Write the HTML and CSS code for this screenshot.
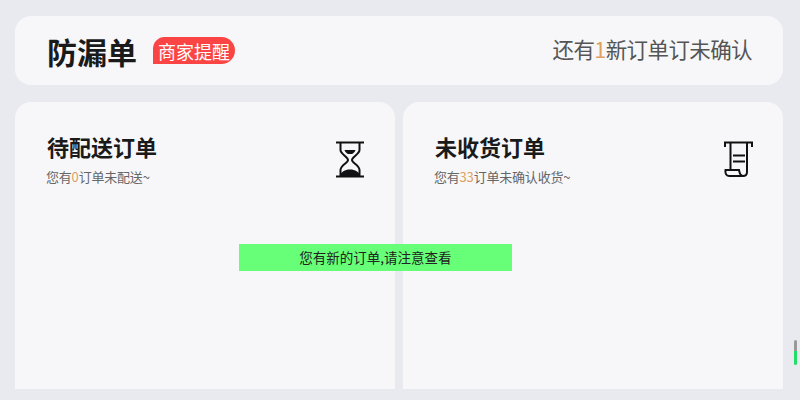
FILE: index.html
```html
<!DOCTYPE html>
<html lang="zh-CN">
<head>
  <meta charset="UTF-8" />
  <meta name="viewport" content="width=device-width, initial-scale=1.0"/>
  <title>防漏单</title>
  <link rel="stylesheet" href="styles.css">
</head>
<body>

  <div class="header">
    <div class="header-left">
      <h1>防漏单</h1>
      <span class="badge">商家提醒</span>
    </div>
    <div class="notice">还有<span class="num">1</span>新订单订未确认</div>
  </div>

  <div class="cards">
    <div class="card">
      <div>
        <h2>待配送订单</h2>
        <p>您有<span class="num">0</span>订单未配送~</p>
      </div>
      <svg class="icon" width="30" height="38" viewBox="0 0 30 38">
        <path d="M1 2.500H29M1 36.500H29" fill="none" stroke="#111" stroke-width="2"/>
        <path d="M5.500 2.500V10C5.500 14 13 17 13 20C13 23 5.500 25 5.500 30V36M24.500 2.500V10C24.500 14 17 17 17 20C17 23 24.500 25 24.500 30V36" fill="none" stroke="#111" stroke-width="2"/>
        <path d="M9.500 10H20.500C20 12 18 13.500 17 14H13C12 13.500 10 12 9.500 10Z" fill="#111"/>
        <path d="M5 36C5.500 32 10 29.500 15 29.500C20 29.500 24.500 32 25 36Z" fill="#111"/>
      </svg>
    </div>
    <div class="card">
      <div>
        <h2>未收货订单</h2>
        <p>您有<span class="num">33</span>订单未确认收货~</p>
      </div>
      <svg class="icon" width="30" height="38" viewBox="0 0 30 38">
        <path d="M2 7V2.500H29V7" fill="none" stroke="#111" stroke-width="2"/>
        <path d="M7.500 2.500V30M24 2.500V32C24 35 22 36 20 36H6" fill="none" stroke="#111" stroke-width="2"/>
        <path d="M6 36C3 36 2 33 2.500 30H16C16.500 33 18 36 20 36" fill="none" stroke="#111" stroke-width="2"/>
        <path d="M10 15.500H22M10 21.500H22" fill="none" stroke="#111" stroke-width="2"/>
      </svg>
    </div>
  </div>

  <div class="toast">您有新的订单,请注意查看</div>
  <div class="scroll-mark"></div>

</body>
</html>
```

FILE: styles.css
```css
body {
  margin: 0;
  height: 400px;
  overflow: hidden;
  box-sizing: border-box;
  padding: 16px 17px 0 15px;
  background: #e9eaef;
  font-family: "Noto Sans CJK SC", "Liberation Sans", sans-serif;
  position: relative;
}
.header {
  height: 69px;
  display: flex;
  justify-content: space-between;
  align-items: center;
  padding: 0 31px 0 32px;
  background: #f7f7f9;
  border-radius: 16px;
}
.header-left {
  display: flex;
  align-items: center;
}
h1 {
  margin: 0;
  font-size: 30px;
  line-height: 40px;
  font-weight: 700;
  color: #1a1a1a;
}
.badge {
  margin-left: 16px;
  width: 82px;
  height: 27px;
  line-height: 29px;
  text-align: center;
  font-size: 18px;
  color: #fff;
  background: #fb4444;
  border-radius: 12px 14px 14px 0;
}
.notice {
  margin-top: -5px;
  font-size: 21.500px;
  letter-spacing: -0.600px;
  color: #555;
}
.num {
  color: #e0a060;
}
.cards {
  margin-top: 17px;
  display: flex;
  gap: 8px;
}
.card {
  flex: 1;
  height: 287px;
  box-sizing: border-box;
  padding: 30px 30px 0 32px;
  display: flex;
  justify-content: space-between;
  align-items: flex-start;
  background: #f7f7f9;
  border-radius: 16px 16px 0 0;
}
h2 {
  margin: 0;
  font-size: 22px;
  line-height: 28px;
  font-weight: 700;
  color: #1a1a1a;
}
.card p {
  margin: 8px 0 0 -1px;
  font-size: 13px;
  line-height: 18px;
  letter-spacing: -0.200px;
  color: #666;
}
.icon {
  margin-top: 8px;
}
.toast {
  position: absolute;
  left: 239px;
  top: 244px;
  width: 273px;
  height: 27px;
  line-height: 27px;
  text-align: center;
  font-size: 13.500px;
  color: #222;
  background: #66ff77;
}
.scroll-mark {
  position: absolute;
  right: 3px;
  top: 340px;
  width: 3px;
  height: 25px;
  border-radius: 2px;
  background: linear-gradient(#999 0, #999 45%, #22dd66 45%, #22dd66 100%);
}
```
